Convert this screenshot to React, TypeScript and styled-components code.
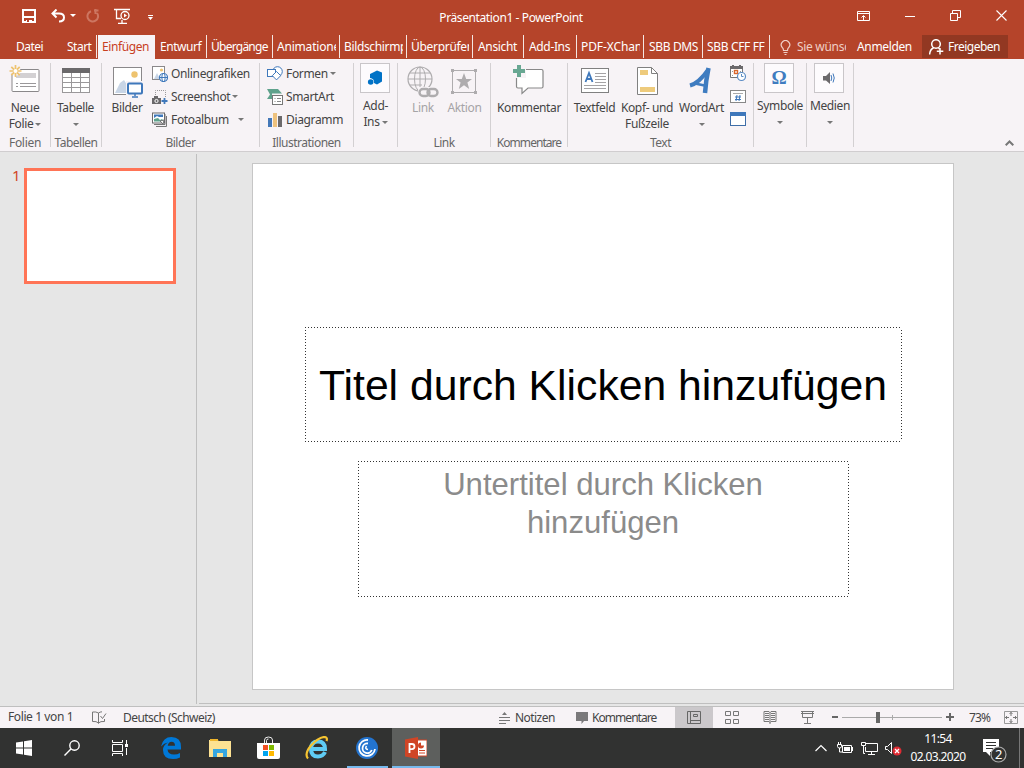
import React from 'react';
import styled, { createGlobalStyle, css } from 'styled-components';

const GlobalStyle = createGlobalStyle`
  * { box-sizing: border-box; }
  body { margin: 0; overflow: hidden; }
`;

const Window = styled.div`
  width: 1024px;
  height: 768px;
  display: flex;
  flex-direction: column;
  font: 12px/16px 'Noto Sans', 'Open Sans', sans-serif;
  letter-spacing: -0.35px;
  color: #444;
  background: #e6e6e6;
  white-space: nowrap;
  svg { display: block; flex: none; }
`;

/* ---------- title bar ---------- */
const TitleBar = styled.header`
  height: 35px;
  flex: none;
  background: #b5442a;
  color: #fff;
  display: grid;
  grid-template-columns: 400px 222px 1fr;
`;
const QuickAccess = styled.div`
  display: flex;
  align-items: center;
  padding: 0 0 5px 22px;
`;
const Caption = styled.div`
  text-align: center;
  line-height: 36px;
  letter-spacing: -0.39px;
`;
const WindowButtons = styled.div`
  display: flex;
  align-items: center;
  justify-content: flex-end;
  gap: 35px;
  padding: 0 17px 5px 0;
`;
const Spacer = styled.span<{ $w: number }>`
  width: ${p => p.$w}px;
  flex: none;
`;

/* ---------- tabs ---------- */
const TabStrip = styled.nav`
  height: 24px;
  flex: none;
  display: flex;
  background: #b5442a;
  color: #fff;
`;
const Tab = styled.div<{ $w: number; $pad?: number; $active?: boolean; $bar?: boolean; $ls?: number }>`
  width: ${p => p.$w}px;
  height: 23px;
  padding: 0 3px 0 ${p => p.$pad ?? 4}px;
  line-height: 24px;
  flex: none;
  letter-spacing: ${p => p.$ls ?? -0.35}px;
  ${p => p.$bar !== false && css`border-right: 1px solid #f5e6e2;`}
  ${p => p.$active && css`
    height: 24px;
    color: #c8401f;
    background: #f7f3f6;
    border-right: 0;
    margin-left: 1px;
  `}
  span { display: block; overflow: hidden; }
`;
const Hint = styled.div`
  display: flex;
  align-items: center;
  width: 76px;
  margin-left: 10px;
  color: #f0cfc6;
  letter-spacing: -0.3px;
  span { width: 49px; margin-left: 6px; overflow: hidden; }
`;
const SignIn = styled.div`
  width: 55px;
  line-height: 24px;
  letter-spacing: -0.35px;
`;
const Share = styled.div`
  display: flex;
  align-items: center;
  gap: 4px;
  width: 86px;
  height: 23px;
  margin-left: 10px;
  padding-left: 7px;
  background: #923822;
  letter-spacing: -0.5px;
`;

/* ---------- ribbon ---------- */
const Ribbon = styled.section`
  height: 93px;
  flex: none;
  display: flex;
  background: #f7f3f6;
  border-bottom: 1px solid #d0cdcf;
`;
const Group = styled.div<{ $w: number }>`
  width: ${p => p.$w}px;
  flex: none;
  display: flex;
  flex-direction: column;
`;
const Divider = styled.div`
  width: 1px;
  flex: none;
  margin: 4px 0;
  background: #d3d0d2;
`;
const GroupBody = styled.div<{ $pad?: number; $center?: boolean }>`
  height: 76px;
  display: flex;
  padding-left: ${p => p.$pad ?? 0}px;
  ${p => p.$center && css`justify-content: center;`}
`;
const GroupName = styled.div<{ $ls?: number }>`
  text-align: center;
  color: #666;
  font-size: 12px;
  line-height: 16px;
  letter-spacing: ${p => p.$ls ?? -0.5}px;
`;
const BigButton = styled.div<{ $w: number; $off?: boolean; $boxed?: boolean }>`
  width: ${p => p.$w}px;
  flex: none;
  display: flex;
  flex-direction: column;
  align-items: center;
  text-align: center;
  padding-top: ${p => (p.$boxed ? 4 : 6)}px;
  color: ${p => (p.$off ? '#a6a4a6' : '#444')};
`;
const Glyph = styled.div<{ $shift?: number }>`
  height: 32px;
  margin-bottom: 3px;
  margin-left: ${p => p.$shift ?? 0}px;
`;
const BoxGlyph = styled.div`
  width: 30px;
  height: 30px;
  margin: 0 2px 5px 0;
  border: 1px solid #c9c6c9;
  background: #fdfbfd;
  display: flex;
  align-items: center;
  justify-content: center;
`;
const Line = styled.div`
  height: 16px;
  display: flex;
  align-items: center;
  gap: 3px;
`;
const SmallList = styled.div`
  padding-top: 3px;
`;
const SmallItem = styled.div`
  height: 23px;
  display: flex;
  align-items: center;
  gap: 3px;
`;
const IconStack = styled.div`
  display: flex;
  flex-direction: column;
  gap: 8px;
  padding: 6px 0 0 4px;
`;
const Arrow = styled.i<{ $ml?: number; $c?: string }>`
  width: 0;
  height: 0;
  flex: none;
  margin-left: ${p => p.$ml ?? 0}px;
  border: 3px solid transparent;
  border-top-color: ${p => p.$c ?? '#777'};
  border-bottom: 0;
`;
const Collapse = styled.div`
  flex: 1;
  display: flex;
  align-items: flex-end;
  justify-content: flex-end;
  padding: 0 10px 5px 0;
`;

/* ---------- workspace ---------- */
const Workspace = styled.main`
  height: 554px;
  flex: none;
  display: flex;
`;
const ThumbPane = styled.aside`
  width: 197px;
  height: 550px;
  margin-top: 2px;
  padding: 14px 0 0 12px;
  border-right: 1px solid #bfbfbf;
  display: flex;
  align-items: flex-start;
  color: #d24726;
  font-size: 15px;
`;
const ThumbNumber = styled.span`
  width: 12px;
  line-height: 14px;
`;
const Thumb = styled.div`
  width: 152px;
  height: 116px;
  border: 3px solid #ff7456;
  background: #fff;
`;
const Canvas = styled.div`
  flex: 1;
  height: 552px;
  margin-left: 2px;
  padding: 11px 0 0 53px;
  border-bottom: 1px solid #bfbfbf;
`;
const Slide = styled.div`
  width: 702px;
  height: 527px;
  border: 1px solid #c6c6c6;
  background: #fff;
  display: flex;
  flex-direction: column;
  align-items: center;
  padding-top: 163px;
  font-family: 'Liberation Sans', Arial, sans-serif;
  letter-spacing: 0;
`;
const hDots = 'repeating-linear-gradient(90deg, #333 0 1px, #fff 1px 3px)';
const vDots = 'repeating-linear-gradient(180deg, #333 0 1px, #fff 1px 3px)';
const Placeholder = styled.div<{ $w: number; $h: number }>`
  width: ${p => p.$w}px;
  height: ${p => p.$h}px;
  text-align: center;
  background:
    ${hDots} top / 100% 1px no-repeat,
    ${hDots} bottom / 100% 1px no-repeat,
    ${vDots} left / 1px 100% no-repeat,
    ${vDots} right / 1px 100% no-repeat;
`;
const SlideTitle = styled(Placeholder)`
  margin-left: 1px;
  padding-right: 1px;
  color: #000;
  font-size: 42.7px;
  line-height: 116px;
`;
const SlideSubtitle = styled(Placeholder)`
  margin-top: 19px;
  padding-top: 5px;
  color: #8b8b8b;
  font-size: 31.1px;
  line-height: 38px;
`;

/* ---------- status bar ---------- */
const StatusBar = styled.footer`
  height: 22px;
  flex: none;
  display: flex;
  align-items: center;
  border-top: 1px solid #bfbfbf;
  background: #f7f3f6;
`;
const StatusItem = styled.div<{ $w: number; $gap?: number; $ls?: number; $up?: number }>`
  width: ${p => p.$w}px;
  flex: none;
  display: flex;
  align-items: center;
  gap: ${p => p.$gap ?? 5}px;
  padding-bottom: ${p => p.$up ?? 0}px;
  letter-spacing: ${p => p.$ls ?? -0.4}px;
`;
const ViewButton = styled.div<{ $on?: boolean }>`
  width: 38px;
  height: 21px;
  flex: none;
  display: flex;
  align-items: center;
  justify-content: center;
  background: ${p => (p.$on ? '#cbc8cb' : 'transparent')};
`;

/* ---------- taskbar ---------- */
const TaskBar = styled.div`
  height: 40px;
  flex: none;
  display: flex;
  background: #313231;
  color: #fff;
`;
const TaskButton = styled.div<{ $w?: number; $on?: boolean }>`
  width: ${p => p.$w ?? 49}px;
  padding-right: 1px;
  display: flex;
  align-items: center;
  justify-content: center;
  background-color: ${p => (p.$on ? '#5d5f5d' : 'transparent')};
`;
const RunningButton = styled(TaskButton)<{ $inset: number }>`
  background-image: linear-gradient(#76b9ed, #76b9ed);
  background-repeat: no-repeat;
  background-size: calc(100% - ${p => p.$inset * 2}px) 2px;
  background-position: center bottom;
`;
const Tray = styled.div`
  margin-left: auto;
  display: flex;
  align-items: center;
`;
const Clock = styled.div`
  width: 56px;
  margin-left: 8px;
  text-align: center;
  line-height: 18px;
  letter-spacing: -0.65px;
`;
const ShowDesktop = styled.div`
  width: 5px;
  height: 40px;
  margin-left: 10px;
  border-left: 1px solid #777;
`;

type TabInfo = { t: string; w: number; pad?: number; active?: boolean; bar?: boolean; ls?: number };
const tabs: TabInfo[] = [
  { t: 'Datei', w: 62, pad: 16, bar: false, ls: -0.5 },
  { t: 'Start', w: 35, pad: 5, ls: -0.5 },
  { t: 'Einfügen', w: 57, pad: 4, active: true, ls: -0.4 },
  { t: 'Entwurf', w: 52, pad: 5, ls: -0.45 },
  { t: 'Übergänge', w: 66, ls: -0.75 },
  { t: 'Animatione', w: 67, ls: -0.2 },
  { t: 'Bildschirmp', w: 67 },
  { t: 'Überprüfen', w: 66, ls: -0.3 },
  { t: 'Ansicht', w: 51, pad: 5 },
  { t: 'Add-Ins', w: 53, pad: 5 },
  { t: 'PDF-XChan', w: 67, ls: -0.1 },
  { t: 'SBB DMS', w: 59, pad: 5 },
  { t: 'SBB CFF FF', w: 67 },
];

const NewSlideIcon = () => (
  <svg width="32" height="32" fill="none">
    <rect x="3" y="4.500" width="27" height="22" rx="1" fill="#fff" stroke="#8a888a" />
    <path d="M7 8h20v5H7z" fill="#d3d1d3" />
    <path d="M7 18.500h2m2 0h16M7 21.500h2m2 0h16" stroke="#9a989a" />
    <circle cx="6.500" cy="6" r="5" fill="#f7f3f6" />
    <path d="M6.500 0v12M.5 6h12M2.300 1.800l8.400 8.400M10.700 1.800l-8.400 8.400" stroke="#eec36f" strokeWidth="1.700" />
    <circle cx="6.500" cy="6" r="2" fill="#fff" />
  </svg>
);
const TableIcon = () => (
  <svg width="28" height="32" shapeRendering="crispEdges">
    <path d="M0 3h28v25H0z" fill="#9a989a" />
    <path d="M0 3h28v5H0z" fill="#6b696b" />
    <g fill="#fff">
      {[8, 13, 18, 23].map(y => [1, 10, 19].map(x => (
        <rect key={`${x}-${y}`} x={x} y={y} width="8" height="4" />
      )))}
    </g>
  </svg>
);
const PicturesIcon = () => (
  <svg width="32" height="34" fill="none">
    <rect x="1.500" y="2.500" width="28" height="27" fill="#fff" stroke="#8a888a" />
    <path d="M3 28l5-10 4-3 8 13z" fill="#c8d5e6" />
    <circle cx="22.500" cy="9.500" r="3.200" fill="#eec36f" />
    <rect x="14" y="16" width="18" height="18" fill="#f7f3f6" />
    <rect x="16" y="18.500" width="14" height="10" rx="1" fill="#fff" stroke="#3f78bb" strokeWidth="2" />
    <path d="M23 29v2m-3 1h6" stroke="#3f78bb" strokeWidth="1.500" />
  </svg>
);
const OnlinePicIcon = () => (
  <svg width="16" height="16" fill="none">
    <rect x=".5" y=".5" width="12" height="13" fill="#fff" stroke="#8a888a" />
    <path d="M2 13l3-6 3 6z" fill="#c8d5e6" />
    <circle cx="9.500" cy="4" r="1.600" fill="#eec36f" />
    <circle cx="11.500" cy="11.500" r="4" fill="#fff" stroke="#3f78bb" strokeWidth="1.200" />
    <ellipse cx="11.500" cy="11.500" rx="1.700" ry="4" stroke="#3f78bb" />
    <path d="M7.500 11.500h8" stroke="#3f78bb" />
  </svg>
);
const ScreenshotIcon = () => (
  <svg width="16" height="16" fill="none">
    <path d="M3.500 6V1.500h10V8" stroke="#9a989a" strokeDasharray="1 1" />
    <path d="M0 9h2V7h4v2h3v6H0z" fill="#6b696b" />
    <circle cx="4.500" cy="12" r="1.600" stroke="#fff" />
    <path d="M12.500 9v6M9.500 12h6" stroke="#3f78bb" strokeWidth="1.800" />
  </svg>
);
const AlbumIcon = () => (
  <svg width="16" height="16" fill="none">
    <path d="M4 14.500h10.500V4M2 12.500h11V2" stroke="#777" />
    <rect x=".5" y="1" width="12" height="10" fill="#fff" stroke="#6b696b" />
    <path d="M2 2.500h9V5H7L5 4 2 6z" fill="#3f78bb" />
    <path d="M2 9.500V7l4-1 2 2 2-1 2 2.500z" fill="#5fa28c" />
    <path d="M8 9l4-1-1 4z" fill="#fff" stroke="#777" />
  </svg>
);
const ShapesIcon = () => (
  <svg width="16" height="16" fill="none" stroke="#3f78bb">
    <circle cx="10.500" cy="5.500" r="4.800" fill="#fff" />
    <rect x=".5" y="3.500" width="8" height="7" fill="#fff" />
    <path d="M9.500 5.500l4.200 4.200-4.200 4.200-4.200-4.200z" fill="#fff" />
  </svg>
);
const SmartArtIcon = () => (
  <svg width="16" height="16" fill="none">
    <path d="M0 0h11l4 4.500H5V10H0l3-4.500z" fill="#5fa28c" />
    <rect x="5.500" y="6.500" width="10" height="9" fill="#fff" stroke="#777" />
    <path d="M7.500 9.500h1m1.500 0h4M7.500 12.500h1m1.500 0h4" stroke="#888" />
  </svg>
);
const ChartIcon = () => (
  <svg width="16" height="16" shapeRendering="crispEdges">
    <path d="M1 6h4v9H1z" fill="#4478b8" />
    <path d="M6 1h4v14H6z" fill="#eec27e" />
    <path d="M11 4h4v11h-4z" fill="#6b696b" />
  </svg>
);
const AddInIcon = () => (
  <svg width="16" height="16" fill="#0072c6">
    <path d="M10 .5l5 2v9l-5 3-3-1.500A4 4 0 0 0 3 8V4z" />
    <circle cx="3.700" cy="12" r="2.800" />
  </svg>
);
const LinkIcon = () => (
  <svg width="32" height="34" fill="none" stroke="#aeacae">
    <circle cx="13" cy="14" r="12" strokeWidth="1.200" />
    <ellipse cx="13" cy="14" rx="5.500" ry="12" />
    <path d="M13 2v24M1 14h24M3 8h20M3 20h12" />
    <path d="M11 22h21v10H11z" fill="#f7f3f6" stroke="none" />
    <rect x="12.500" y="24" width="10" height="7" rx="3.500" strokeWidth="2.400" />
    <rect x="20.500" y="24" width="10" height="7" rx="3.500" strokeWidth="2.400" />
  </svg>
);
const ActionIcon = () => (
  <svg width="28" height="32">
    <path d="M2.500 5.500h23v22h-23z" fill="none" stroke="#aeacae" />
    <path d="M1 4h3v3H1zM24 4h3v3h-3zM1 26h3v3H1zM24 26h3v3h-3z" fill="#aeacae" />
    <path d="M14 8l2.200 6H22l-4.600 3.600L19.200 24 14 20.200 8.800 24l1.800-6.400L6 14h5.800z" fill="#aeacae" />
  </svg>
);
const CommentIcon = () => (
  <svg width="32" height="32" fill="none">
    <path d="M3.500 4.500h25q1.500 0 1.500 1.500v15.500q0 1.500-1.500 1.500H15l-6 5.500V23H5q-1.500 0-1.500-1.500z" fill="#fff" stroke="#888" strokeWidth="1.200" />
    <path d="M0 0h13v13H0z" fill="#f7f3f6" />
    <path d="M6 0v12M0 6h12" stroke="#68a792" strokeWidth="4" />
  </svg>
);
const TextBoxIcon = () => (
  <svg width="28" height="32" fill="none">
    <rect x=".5" y="3.500" width="27" height="24" fill="#fff" stroke="#808080" />
    <path d="M4.500 17L8 8l3.500 9M5.500 14h5" stroke="#3f78bb" strokeWidth="1.800" />
    <path d="M14 8.500h11M14 11.500h11M14 14.500h11M14 17.500h11M3 20.500h22M3 23.500h22" stroke="#a5a3a5" />
  </svg>
);
const HeaderIcon = () => (
  <svg width="22" height="32" fill="none">
    <path d="M.5 2.500h14l6 6v21H.5z" fill="#fff" stroke="#808080" />
    <path d="M14.500 2.500v6h6" stroke="#808080" />
    <path d="M3 5h8v5H3zM3 22h15v5H3z" fill="#eecb7c" />
  </svg>
);
const WordArtIcon = () => (
  <svg width="26" height="32" fill="none" stroke="#3f7cc0">
    <path d="M2 20.500Q11 18 20 5" strokeWidth="4" />
    <path d="M20.500 3Q18 15 17 28" strokeWidth="4.500" />
    <path d="M7 18.500l12 2.500" strokeWidth="2.800" />
  </svg>
);
const DateIcon = () => (
  <svg width="17" height="17" fill="none">
    <path d="M.5 1.500h12v11H.5z" fill="#fff" stroke="#777" />
    <path d="M0 1h13v3H0zM2 0h2v2H2zM9 0h2v2H9z" fill="#6b696b" />
    <path d="M2 6.500h1m7 0h1M2 10.500h1" stroke="#999" />
    <rect x="4.500" y="5.500" width="3" height="3" stroke="#d9662c" strokeWidth="1.400" />
    <circle cx="11.500" cy="11.500" r="4" fill="#fff" stroke="#5b8cc4" strokeWidth="1.200" />
    <path d="M11.500 9v2.500h2" stroke="#5b8cc4" />
  </svg>
);
const NumberIcon = () => (
  <svg width="16" height="14" fill="none">
    <rect x=".5" y=".5" width="15" height="12" fill="#fff" stroke="#888" />
    <path d="M3 3.500h10" stroke="#aaa" />
    <path d="M7 5l-1 6m4-6l-1 6M5 7h6M5 9.500h6" stroke="#3f78bb" />
  </svg>
);
const ObjectIcon = () => (
  <svg width="16" height="14" fill="none">
    <rect x=".5" y=".5" width="15" height="13" fill="#fff" stroke="#3f6ea8" />
    <path d="M0 0h16v4H0z" fill="#3f78bb" />
  </svg>
);
const Omega = styled.b`
  color: #3f7cc0;
  font: bold 19px/20px 'Liberation Serif', serif;
  letter-spacing: 0;
`;
const SpeakerIcon = () => (
  <svg width="14" height="14" fill="none">
    <path d="M1 5h3l4-4v12L4 9.500H1z" fill="#6b696b" />
    <path d="M9 4q1.500 3 0 6M11 2.500q2.500 4.500 0 9" stroke="#3f78bb" />
  </svg>
);

export default function App() {
  return (
    <Window>
      <GlobalStyle />
      <TitleBar>
        <QuickAccess>
          <svg width="14" height="14" fill="none">
            <path d="M1 1h12v12H1z" stroke="#fff" strokeWidth="2" />
            <path d="M2 8h10M4 12h6" stroke="#fff" strokeWidth="2" />
            <path d="M5 11h2v2H5z" fill="#b5442a" />
          </svg>
          <Spacer $w={15} />
          <svg width="14" height="14" fill="none" stroke="#fff" strokeWidth="2">
            <path d="M5.500.5L1.500 4.500l4 4M1.500 4.500H8q5 0 5 4t-5 4" />
          </svg>
          <Arrow $ml={5} $c="#fff" />
          <Spacer $w={10} />
          <svg width="14" height="14" fill="none" stroke="#cd7661" strokeWidth="2">
            <path d="M5 2.200A5.300 5.300 0 1 0 11 4M8 1.500h4.500M9.500 0v5" />
          </svg>
          <Spacer $w={14} />
          <svg width="17" height="16" fill="none" stroke="#fff" strokeWidth="1.300">
            <path d="M0 1.500h16M2.500 2v8.500H7M4 15.500h9M8 12v3" />
            <circle cx="11" cy="7.500" r="4" />
            <path d="M10 5.500l3 2-3 2z" fill="#fff" stroke="none" />
          </svg>
          <Spacer $w={17} />
          <svg width="6" height="8">
            <path d="M0 3h5v1H0zM0 5h5L2.500 8z" fill="#fff" />
          </svg>
        </QuickAccess>
        <Caption>Präsentation1 - PowerPoint</Caption>
        <WindowButtons>
          <svg width="13" height="10" fill="none" stroke="#fff">
            <path d="M.5.5h12v9H.5zM1 2.500h11M6.500 9V5M4.500 6.500l2-2 2 2" />
          </svg>
          <svg width="10" height="10" stroke="#fff"><path d="M0 5.500h10" /></svg>
          <svg width="11" height="11" fill="none" stroke="#fff">
            <path d="M.5 3.500h7v7h-7zM2.500 3V.5h8v7H8" />
          </svg>
          <svg width="11" height="11" stroke="#fff" strokeWidth="1.100"><path d="M.5.5l10 10M10.500.5l-10 10" /></svg>
        </WindowButtons>
      </TitleBar>

      <TabStrip>
        {tabs.map(x => (
          <Tab key={x.t} $w={x.w} $pad={x.pad} $active={x.active} $bar={x.bar} $ls={x.ls}>
            <span>{x.t}</span>
          </Tab>
        ))}
        <Hint>
          <svg width="11" height="15" fill="none" stroke="#f0cfc6" strokeWidth="1.200">
            <path d="M3.500 10.500Q3.500 8.500 2.300 7.500a4.200 4.200 0 1 1 6.400 0Q7.500 8.500 7.500 10.500zM3.500 12.500h4M4.500 14.500h2" />
          </svg>
          <span>Sie wünsc</span>
        </Hint>
        <Spacer $w={1} />
        <SignIn>Anmelden</SignIn>
        <Share>
          <svg width="15" height="16" fill="none" stroke="#fff" strokeWidth="1.500">
            <circle cx="7" cy="5" r="4.300" />
            <path d="M.6 15.500q.4-5 4-6.700M9.500 9l1 1M11 9v6.500M7.800 12.300h6.500" />
          </svg>
          Freigeben
        </Share>
      </TabStrip>

      <Ribbon>
        <Group $w={50}>
          <GroupBody>
            <BigButton $w={50}>
              <Glyph $shift={-1}><NewSlideIcon /></Glyph>
              <Line>Neue</Line>
              <Line>Folie <Arrow $ml={-1} /></Line>
            </BigButton>
          </GroupBody>
          <GroupName $ls={-0.3}>Folien</GroupName>
        </Group>
        <Divider />
        <Group $w={50}>
          <GroupBody>
            <BigButton $w={49}>
              <Glyph><TableIcon /></Glyph>
              <Line>Tabelle</Line>
              <Line><Arrow /></Line>
            </BigButton>
          </GroupBody>
          <GroupName>Tabellen</GroupName>
        </Group>
        <Divider />
        <Group $w={157}>
          <GroupBody>
            <BigButton $w={50}>
              <Glyph $shift={1}><PicturesIcon /></Glyph>
              <Line>Bilder</Line>
            </BigButton>
            <SmallList>
              <SmallItem><OnlinePicIcon />Onlinegrafiken</SmallItem>
              <SmallItem><ScreenshotIcon />Screenshot<Arrow $ml={-1} /></SmallItem>
              <SmallItem><AlbumIcon />Fotoalbum<Arrow $ml={6} /></SmallItem>
            </SmallList>
          </GroupBody>
          <GroupName>Bilder</GroupName>
        </Group>
        <Divider />
        <Group $w={93}>
          <GroupBody $pad={7}>
            <SmallList>
              <SmallItem><ShapesIcon />Formen<Arrow $ml={-1} /></SmallItem>
              <SmallItem><SmartArtIcon />SmartArt</SmallItem>
              <SmallItem><ChartIcon />Diagramm</SmallItem>
            </SmallList>
          </GroupBody>
          <GroupName>Illustrationen</GroupName>
        </Group>
        <Divider />
        <Group $w={43}>
          <GroupBody $center>
            <BigButton $w={43} $boxed>
              <BoxGlyph><AddInIcon /></BoxGlyph>
              <Line>Add-</Line>
              <Line>Ins <Arrow $ml={-1} /></Line>
            </BigButton>
          </GroupBody>
        </Group>
        <Divider />
        <Group $w={92}>
          <GroupBody $pad={5}>
            <BigButton $w={40} $off>
              <Glyph><LinkIcon /></Glyph>
              <Line>Link</Line>
            </BigButton>
            <BigButton $w={43} $off>
              <Glyph $shift={-1}><ActionIcon /></Glyph>
              <Line>Aktion</Line>
            </BigButton>
          </GroupBody>
          <GroupName>Link</GroupName>
        </Group>
        <Divider />
        <Group $w={76}>
          <GroupBody>
            <BigButton $w={76}>
              <Glyph $shift={-1}><CommentIcon /></Glyph>
              <Line>Kommentar</Line>
            </BigButton>
          </GroupBody>
          <GroupName $ls={-0.95}>Kommentare</GroupName>
        </Group>
        <Divider />
        <Group $w={185}>
          <GroupBody $pad={4}>
            <BigButton $w={45}>
              <Glyph><TextBoxIcon /></Glyph>
              <Line>Textfeld</Line>
            </BigButton>
            <BigButton $w={60}>
              <Glyph $shift={2}><HeaderIcon /></Glyph>
              <Line>Kopf- und</Line>
              <Line>Fußzeile</Line>
            </BigButton>
            <BigButton $w={49}>
              <Glyph $shift={-2}><WordArtIcon /></Glyph>
              <Line>WordArt</Line>
              <Line><Arrow /></Line>
            </BigButton>
            <IconStack>
              <DateIcon />
              <NumberIcon />
              <ObjectIcon />
            </IconStack>
          </GroupBody>
          <GroupName>Text</GroupName>
        </Group>
        <Divider />
        <Group $w={52}>
          <GroupBody>
            <BigButton $w={52} $boxed>
              <BoxGlyph><Omega>Ω</Omega></BoxGlyph>
              <Line>Symbole</Line>
              <Line><Arrow /></Line>
            </BigButton>
          </GroupBody>
        </Group>
        <Divider />
        <Group $w={46}>
          <GroupBody>
            <BigButton $w={46} $boxed>
              <BoxGlyph><SpeakerIcon /></BoxGlyph>
              <Line>Medien</Line>
              <Line><Arrow /></Line>
            </BigButton>
          </GroupBody>
        </Group>
        <Divider />
        <Collapse>
          <svg width="9" height="6" fill="none" stroke="#777" strokeWidth="2"><path d="M.7 5.300l3.800-3.800 3.800 3.800" /></svg>
        </Collapse>
      </Ribbon>

      <Workspace>
        <ThumbPane>
          <ThumbNumber>1</ThumbNumber>
          <Thumb />
        </ThumbPane>
        <Canvas>
          <Slide>
            <SlideTitle $w={597} $h={115}>Titel durch Klicken hinzufügen</SlideTitle>
            <SlideSubtitle $w={491} $h={136}>
              Untertitel durch Klicken<br />hinzufügen
            </SlideSubtitle>
          </Slide>
        </Canvas>
      </Workspace>

      <StatusBar>
        <Spacer $w={8} />
        <StatusItem $w={84} $up={2}>Folie 1 von 1</StatusItem>
        <StatusItem $w={31}>
          <svg width="15" height="13" fill="none" stroke="#777">
            <path d="M6.500 2v10.500M6.500 2Q4 .5.500 1v9.500q4-.5 6 1.500 2-2 6-1.500V8M6.500 2Q8 .8 10 .8M8.500 5l2 2.500L14 2.500" />
          </svg>
        </StatusItem>
        <StatusItem $w={376} $ls={-0.55}>Deutsch (Schweiz)</StatusItem>
        <StatusItem $w={77} $ls={-0.55}>
          <svg width="11" height="12"><path d="M5.500 0L8 3H3zM0 5h11v1H0zM0 8h11v1H0zM0 11h7v1H0z" fill="#777" /></svg>
          Notizen
        </StatusItem>
        <StatusItem $w={99} $gap={4} $ls={-0.95}>
          <svg width="12" height="12"><path d="M0 0h12v9H8l-2.500 3V9H0z" fill="#7a797b" /></svg>
          Kommentare
        </StatusItem>
        <ViewButton $on>
          <svg width="14" height="13" fill="none" stroke="#666"><path d="M.5.500h13v12H.5zM3.500.5v12M4 9.500h9M6.500 3.500h4v2h-4z" /></svg>
        </ViewButton>
        <ViewButton>
          <svg width="14" height="13" fill="none" stroke="#777"><path d="M.5.500h5v4h-5zM8.500.500h5v4h-5zM.5 8.500h5v4h-5zM8.500 8.500h5v4h-5z" /></svg>
        </ViewButton>
        <ViewButton>
          <svg width="15" height="13" fill="none" stroke="#777"><path d="M1 .5h5l1 1 1-1h5v10h-5l-1 1-1-1H1zM7 1v12M2 2.500h4M2 4.500h4M2 6.500h4M2 8.500h4M8 2.500h4M8 4.500h4M8 6.500h4M8 8.500h4" /></svg>
        </ViewButton>
        <ViewButton>
          <svg width="15" height="13" fill="none" stroke="#777"><path d="M0 .5h13M1.500 1v5.500h10V1M6.500 7v5M3 12.500h7M0 2.500h13" /></svg>
        </ViewButton>
        <Spacer $w={5} />
        <svg width="122" height="13">
          <path d="M0 5h6v2H0zM114 5h8v2h-8zM117 2h2v8h-2z" fill="#666" />
          <path d="M10 6h100v1H10zM60 4h1v5h-1z" fill="#aaa" />
          <path d="M44 1h4v11h-4z" fill="#666" />
        </svg>
        <Spacer $w={15} />
        <StatusItem $w={35} $ls={-0.9}>73%</StatusItem>
        <svg width="14" height="13" fill="none" stroke="#777"><path d="M.5.500h13v12H.5z" stroke="#999" /><path d="M7 1v4M5.500 3L7 1.500 8.500 3M7 12V8M5.500 10L7 11.500 8.500 10M1 6.500h4M13 6.500H9M3 5L1.500 6.500 3 8M11 5l1.500 1.500L11 8" /></svg>
      </StatusBar>

      <TaskBar>
        <TaskButton $w={49}>
          <svg width="16" height="16" fill="#fff"><path d="M0 2.500l7-1v6H0zM8 1.300L16 0v7.500H8zM0 8.500h7v6l-7-1zM8 8.500h8V16l-8-1.300z" /></svg>
        </TaskButton>
        <TaskButton $w={47}>
          <svg width="16" height="16" fill="none" stroke="#fff" strokeWidth="1.400"><circle cx="10.500" cy="5.500" r="4.700" /><path d="M7.200 8.800L.5 15.500" /></svg>
        </TaskButton>
        <TaskButton $w={49}>
          <svg width="18" height="16" fill="none" stroke="#fff"><path d="M1.500 4.500h10v7h-10zM1.500 0v2.500h10V0M1.500 16v-2.500h10V16M15.500 0v4m0 4v7" /><path d="M14 4h3v3h-3z" fill="#fff" stroke="none" /></svg>
        </TaskButton>
        <Spacer $w={2} />
        <TaskButton>
          <svg width="20" height="22"><path d="M0 9.500Q2 0 10.500 0 20 0 20 10v2.500H6.500q.5 5 6.500 5 3.500 0 6-1.500v4.500Q16 22 12 22 2 22 2 13q0-5 5-7.500Q3 6 0 9.500zM6.700 8.800h7.300q0-4-3.500-4-3 0-3.800 4z" fill="#0078d7" /></svg>
        </TaskButton>
        <TaskButton>
          <svg width="22" height="19"><path d="M0 1h8l2 1h12v16H0z" fill="#fde292" /><path d="M1 0h8v2H1z" fill="#efb62d" /><path d="M4 18v-8h14v8h-4v-4H8v4z" fill="#35a6e0" /></svg>
        </TaskButton>
        <TaskButton $w={47}>
          <svg width="23" height="24"><path d="M7.500 8V4q0-3 4-3t4 3v4M9.500 7V4.500q0-1.500 2-1.500" fill="none" stroke="#eee" /><path d="M0 7h23v14q0 2-2 2H2q-2 0-2-2z" fill="#fff" /><path d="M6 9h5v5H6z" fill="#f25022" /><path d="M12 9h5v5h-5z" fill="#7fba00" /><path d="M6 15h5v5H6z" fill="#00a4ef" /><path d="M12 15h5v5h-5z" fill="#ffb900" /></svg>
        </TaskButton>
        <TaskButton $w={51}>
          <svg width="24" height="24" fill="none"><path d="M20 16q-2 4.500-7 4.500-7 0-7-7.500t7-7.500q7 0 7 7.500H8" stroke="#5fcdf5" strokeWidth="4" /><path d="M3 22.500Q-1 18 6 9.500 13 2 19 1q4 0 2.500 4" stroke="#f6c431" strokeWidth="2.200" /></svg>
        </TaskButton>
        <RunningButton $inset={4}>
          <svg width="22" height="22" fill="none"><circle cx="11" cy="11" r="11" fill="#2374cf" /><path d="M12 3a8 8 0 1 0 7 9M12 6.500a4.800 4.800 0 1 0 3.800 6.500" stroke="#fff" strokeWidth="1.800" /><path d="M10.500 9q-2 3 1.500 3.500" stroke="#fff" strokeWidth="1.500" /></svg>
        </RunningButton>
        <RunningButton $w={48} $on $inset={0}>
          <svg width="22" height="22" fill="none"><path d="M11 3h11v16H11z" fill="#fff" stroke="#d04526" /><path d="M14 13.500h6M14 16h6" stroke="#d04526" /><path d="M16 5.500a3 3 0 1 0 3 3h-3z" fill="#d04526" /><path d="M0 2.500L13 0v22L0 19.500z" fill="#d04526" /><path d="M4.500 16V7H7q2.500 0 2.500 2.500T7 12.200H5" stroke="#fff" strokeWidth="1.800" /></svg>
        </RunningButton>
        <Tray>
          <svg width="12" height="8" fill="none" stroke="#fff" strokeWidth="1.200"><path d="M.5 7L6 1.500 11.500 7" /></svg>
          <Spacer $w={10} />
          <svg width="16" height="12" fill="none" stroke="#fff"><path d="M5.500 3.500h9v7h-9zM15.500 5v4M.5 2.500h4v2q0 1.500-2 1.500T.5 4.500zM1.500 0v2M3.500 0v2M2.500 6v4H5" /><path d="M7 5h6v4H7z" fill="#fff" stroke="none" /></svg>
          <Spacer $w={8} />
          <svg width="17" height="15" fill="none" stroke="#fff"><path d="M5 2.500h11.500v8H4.500V6M10.500 11v2.500M7 13.500h7M.5 1.500h4v3h-4zM2.500 5v7.500H4" /></svg>
          <Spacer $w={7} />
          <svg width="17" height="15" fill="none"><path d="M.5 5.500h2l4-4v11l-4-4h-2z" stroke="#fff" /><circle cx="12" cy="10" r="4.500" fill="#e02b33" /><path d="M10 8l4 4m0-4l-4 4" stroke="#fff" strokeWidth="1.300" /></svg>
          <Clock>11:54<br />02.03.2020</Clock>
          <Spacer $w={17} />
          <svg width="26" height="30" fill="none"><path d="M0 6h16v13H7v4l-4-4H0z" fill="#fff" /><path d="M3 9.500h10M3 12.500h10M3 15.500h7" stroke="#313231" /><circle cx="15.500" cy="21.500" r="7.500" fill="#313231" stroke="#aaa" strokeWidth="1.200" /><text x="12" y="26" fill="#fff" fontSize="13">2</text></svg>
          <ShowDesktop />
        </Tray>
      </TaskBar>
    </Window>
  );
}
